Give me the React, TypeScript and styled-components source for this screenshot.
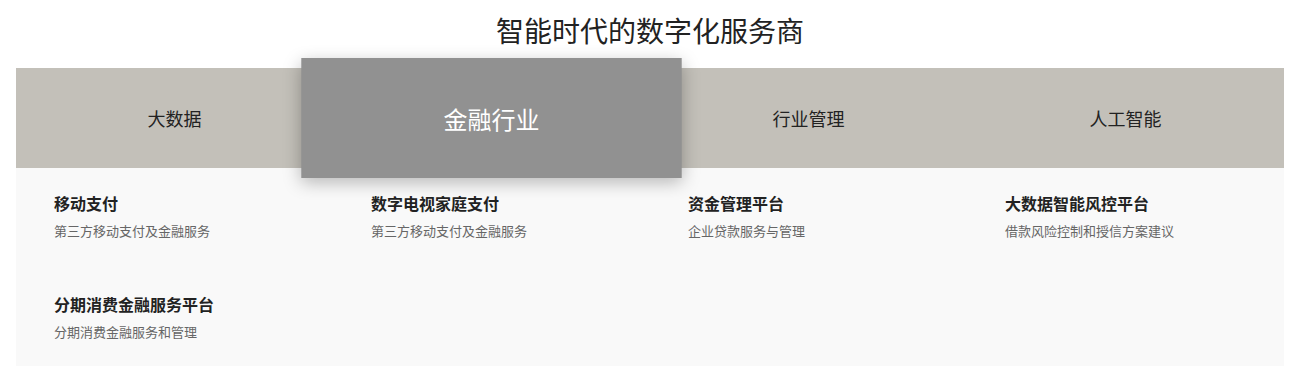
import React, { useState } from "react";
import styled, { createGlobalStyle } from "styled-components";

const GlobalStyle = createGlobalStyle`
  body {
    margin: 0;
    background: #fff;
    font-family: "Noto Sans CJK SC", "Noto Sans", sans-serif;
  }
`;

const tabs = [
  {
    name: "大数据",
    items: [],
  },
  {
    name: "金融行业",
    items: [
      { title: "移动支付", desc: "第三方移动支付及金融服务" },
      { title: "数字电视家庭支付", desc: "第三方移动支付及金融服务" },
      { title: "资金管理平台", desc: "企业贷款服务与管理" },
      { title: "大数据智能风控平台", desc: "借款风险控制和授信方案建议" },
      { title: "分期消费金融服务平台", desc: "分期消费金融服务和管理" },
    ],
  },
  { name: "行业管理", items: [] },
  { name: "人工智能", items: [] },
];

const App = () => {
  const [active, setActive] = useState(1);

  return (
    <>
      <GlobalStyle />
      <Section>
        <Heading>智能时代的数字化服务商</Heading>
        <TabBar>
          {tabs.map((t, i) => (
            <Tab key={t.name} $active={i === active} onClick={() => setActive(i)}>
              {t.name}
            </Tab>
          ))}
        </TabBar>
        <Panel>
          {tabs[active].items.map((item) => (
            <Item key={item.title}>
              <ItemTitle>{item.title}</ItemTitle>
              <ItemDesc>{item.desc}</ItemDesc>
            </Item>
          ))}
        </Panel>
      </Section>
    </>
  );
};

export default App;

const Section = styled.section`
  width: 1268px;
  margin-left: 16px;
`;

const Heading = styled.h2`
  margin: 0;
  padding: 10px 0 18px;
  font-size: 28px;
  line-height: 40px;
  font-weight: 400;
  color: #222;
  text-align: center;
`;

const TabBar = styled.ul`
  margin: 0;
  padding: 0;
  list-style: none;
  display: grid;
  grid-template-columns: repeat(4, 1fr);
  height: 100px;
  background: #c3c0b9;
  position: relative;
  z-index: 2;
`;

const Tab = styled.li<{ $active: boolean }>`
  display: flex;
  align-items: center;
  justify-content: center;
  font-size: ${(p) => (p.$active ? "20px" : "18px")};
  color: ${(p) => (p.$active ? "#fff" : "#222")};
  background: ${(p) => (p.$active ? "#919191" : "transparent")};
  box-shadow: ${(p) => (p.$active ? "0 4px 14px rgba(0, 0, 0, 0.28)" : "none")};
  transform: ${(p) => (p.$active ? "scale(1.2)" : "none")};
  cursor: pointer;
`;

const Panel = styled.div`
  background: #f9f9f9;
  padding: 23px 0 30px;
  display: grid;
  grid-template-columns: repeat(4, 1fr);
  row-gap: 42px;
  min-height: 160px;
`;

const Item = styled.div`
  padding-left: 38px;
`;

const ItemTitle = styled.h4`
  margin: 0;
  font-size: 16px;
  line-height: 24px;
  font-weight: 700;
  color: #222;
`;

const ItemDesc = styled.p`
  margin: 4px 0 0;
  font-size: 13px;
  line-height: 24px;
  color: #666;
`;
